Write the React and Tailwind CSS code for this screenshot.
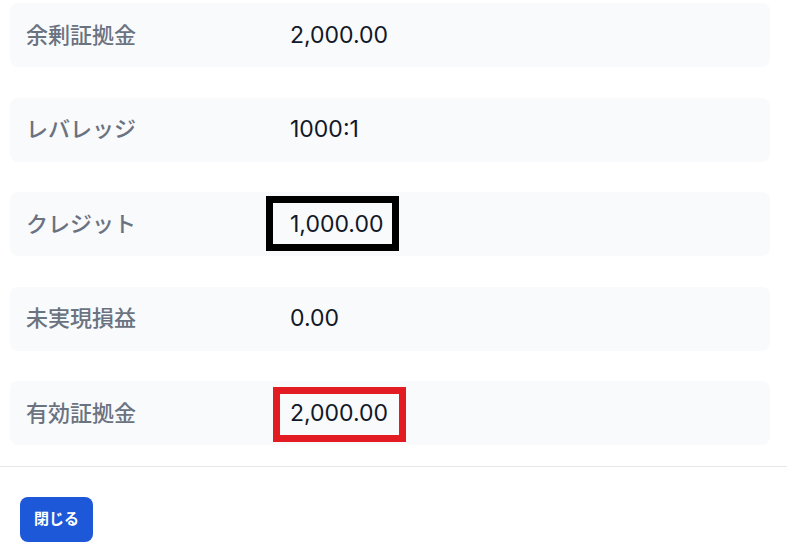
import React from "react";

const rows = [
  { label: "余剰証拠金", value: "2,000.00" },
  { label: "レバレッジ", value: "1000:1" },
  { label: "クレジット", value: "1,000.00", mark: "black" },
  { label: "未実現損益", value: "0.00" },
  { label: "有効証拠金", value: "2,000.00", mark: "red" },
];

const InfoRow = ({ label, value, mark }) => (
  <div className="relative flex items-center h-[64px] rounded-lg bg-[#f8fafc] px-4">
    <div className="w-[264px] text-[22px] font-medium text-[#6b7280]">{label}</div>
    <div className="text-[23px] text-[#111827]">{value}</div>
    {mark === "black" && (
      <div className="absolute left-[256px] top-[4px] w-[133px] h-[55px] border-[7px] border-black" />
    )}
    {mark === "red" && (
      <div className="absolute left-[263px] top-[6px] w-[133px] h-[55px] border-[7px] border-[#e31b23]" />
    )}
  </div>
);

export default function App() {
  return (
    <div
      className="w-[787px] h-[552px] bg-white overflow-hidden"
      style={{ fontFamily: "Inter, 'Noto Sans CJK JP', sans-serif" }}
    >
      <div className="flex flex-col gap-[30.5px] pt-[3px] pl-[10px] pr-[17px]">
        {rows.map((r) => (
          <InfoRow key={r.label} {...r} />
        ))}
      </div>
      <div className="mt-[21px] border-t border-[#e5e7eb]" />
      <div className="pt-[30px] pl-[20px]">
        <button className="h-[45px] px-[14px] rounded-lg bg-[#1d58d8] text-white text-[15px] font-bold">
          閉じる
        </button>
      </div>
    </div>
  );
}
